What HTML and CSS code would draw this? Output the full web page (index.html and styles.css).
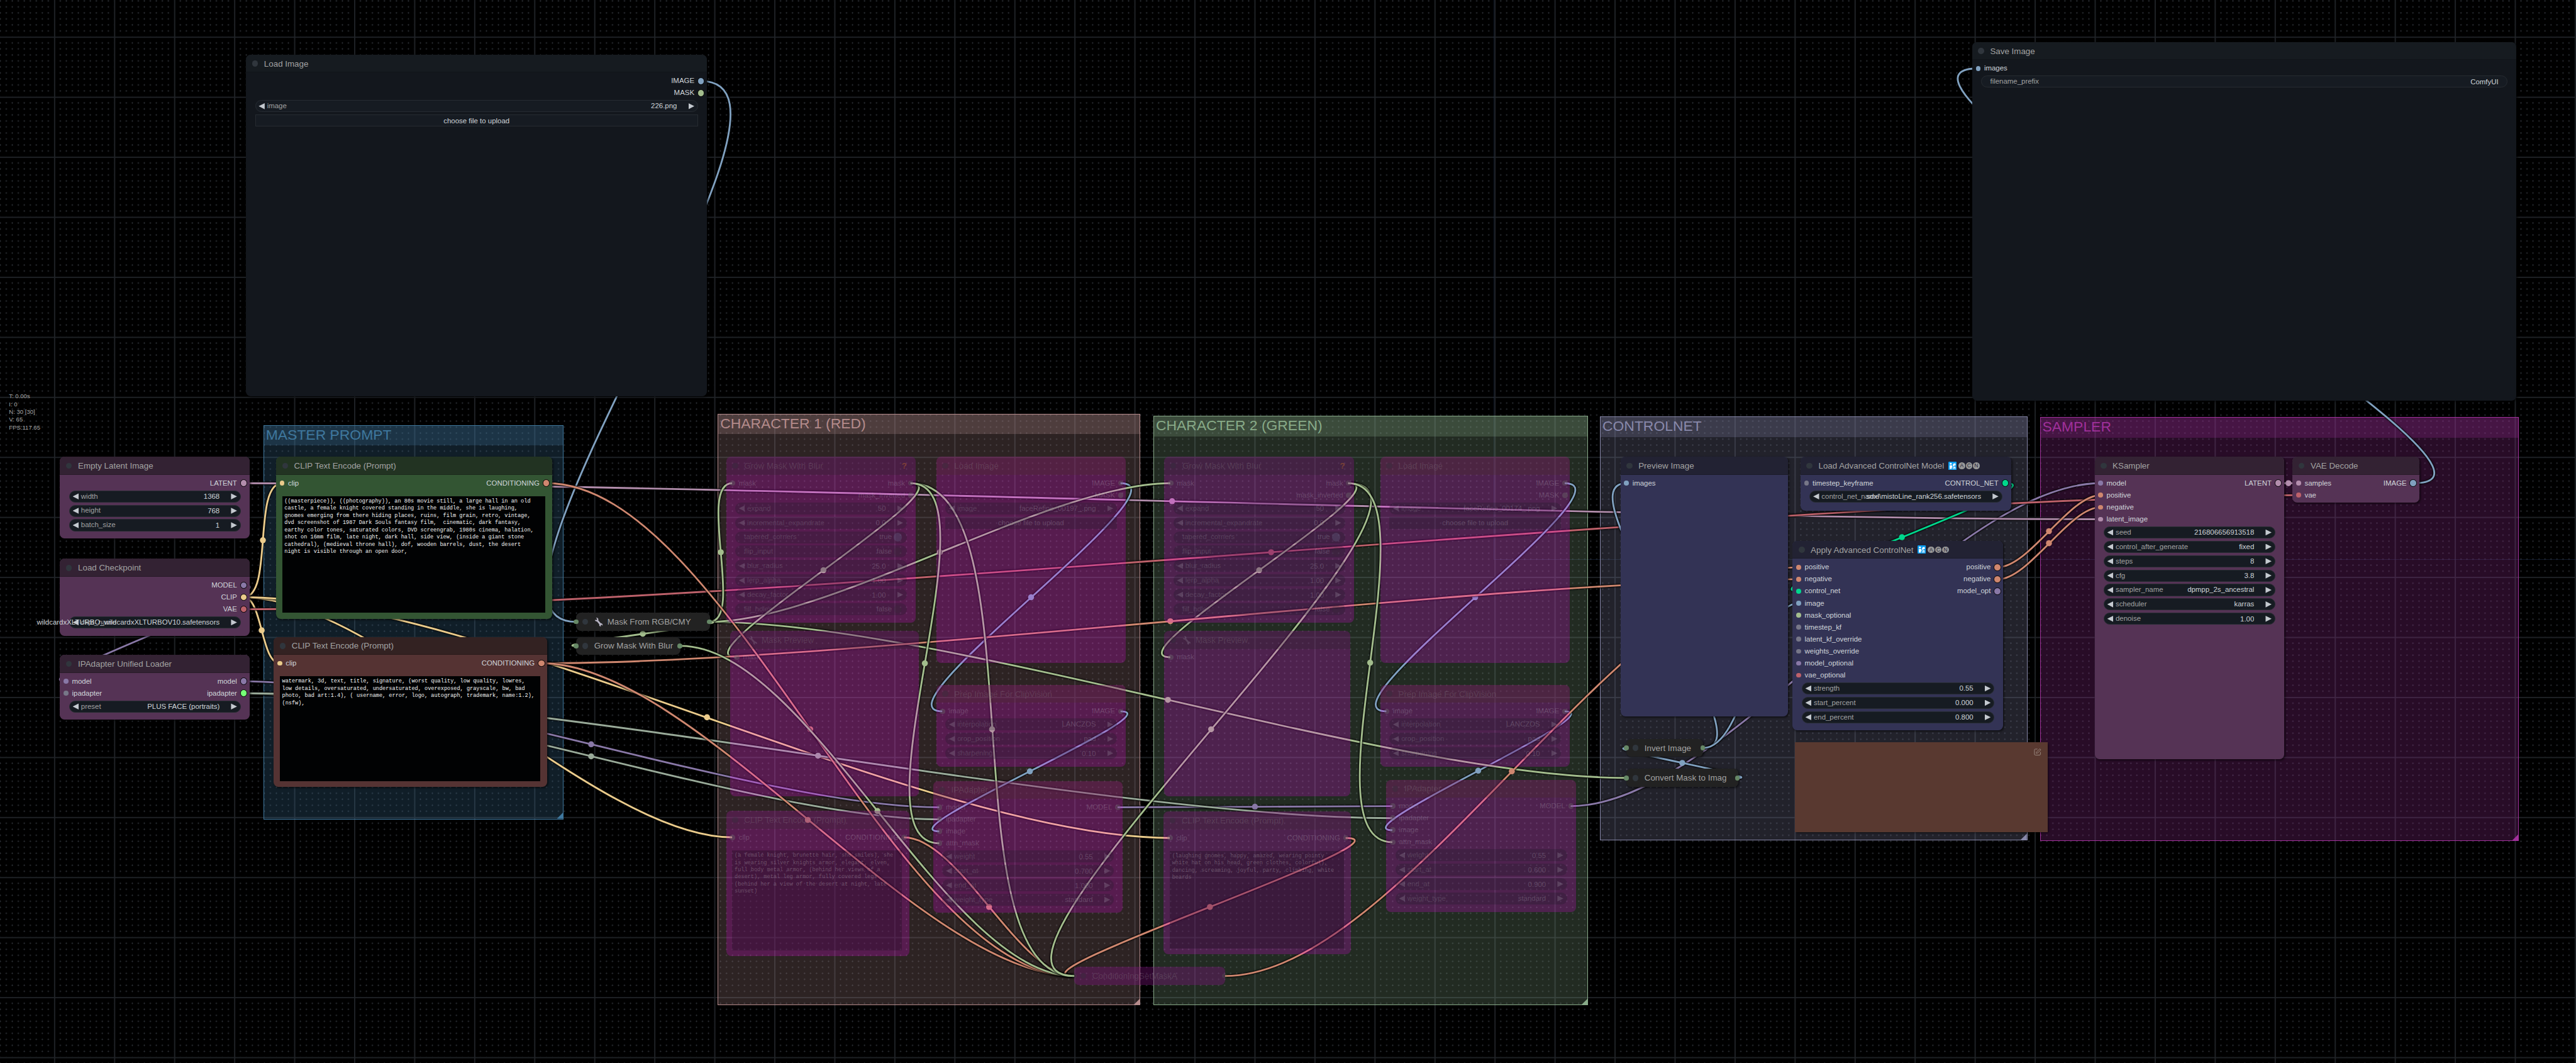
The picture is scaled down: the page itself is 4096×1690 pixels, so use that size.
FILE: index.html
```html
<!DOCTYPE html>
<html lang="en">
<head>
<meta charset="utf-8">
<title>ComfyUI</title>
<link rel="stylesheet" href="styles.css">
</head>
<body>
<main class="canvas">

<svg class="grid" aria-hidden="true">
  <defs>
    <pattern id="dots" x="0" y="1" width="10" height="10" patternUnits="userSpaceOnUse">
      <rect class="dot" x="0" y="0" width="2" height="1"/><rect class="dot" x="9" y="0" width="1" height="1"/>
      <rect class="dot" x="0" y="1" width="1" height="1"/><rect class="dot" x="0" y="9" width="1" height="1"/>
    </pattern>
    <pattern id="lines" x="90" y="61" width="100" height="100" patternUnits="userSpaceOnUse">
      <rect class="clear" width="100" height="4" y="-1"/><rect class="clear" y="99" width="100" height="1"/>
      <rect class="clear" width="4" height="100" x="-1"/><rect class="clear" x="99" width="1" height="100"/>
      <rect width="100" height="2"/><rect width="2" height="100"/>
    </pattern>
    <symbol id="wrench" viewBox="0 0 16 16"><path d="M1 4.2 3.4 5l1.4-1L4.600 2.200 3 .8C5 .2 7 1.400 7.200 3.400c.1.700 0 1.200-.2 1.800l4.400 5.200c.7-.1 1.600 0 2.400.7 1 .8 1.300 2.200.8 3.700l-1.500-1.500-1.500.4-.4 1.400 1 .8c-1.600.4-3-.3-3.400-1.700-.2-.7-.1-1.300.1-1.900L4.600 7.200C3 7.500 1 6.300 1 4.200z"/></symbol>
    <symbol id="passport" viewBox="0 0 14 14"><rect width="14" height="14" rx="1.500" fill="#0a9df0"/><circle cx="4" cy="3.400" r="1.600"/><path d="M2.200 6h3.800l1 3.600H5.600V12H2.200z"/><path d="M7.600 4.600 9 3h3v3.400h-1.600L9.200 7.600H7.600zM8 9l2-.8 2 .8v1.200H8zM7.200 11h5v1h-5z"/></symbol>
    <symbol id="edit" viewBox="0 0 14 14"><path d="M7 2H3.500Q2 2 2 3.500v7Q2 12 3.500 12h7q1.500 0 1.500-1.500V7M5 9l.5-2.200L11 1.500l1.700 1.700L7.200 8.600z"/></symbol>
  </defs>
  <rect width="100%" height="100%" fill="url(#dots)"/>
  <rect width="100%" height="100%" fill="url(#lines)"/>
</svg>
<div class="axis"></div>

<section class="group master"><h2>MASTER PROMPT</h2></section>
<section class="group red"><h2>CHARACTER 1 (RED)</h2></section>
<section class="group green"><h2>CHARACTER 2 (GREEN)</h2></section>
<section class="group control"><h2>CONTROLNET</h2></section>
<section class="group sampler"><h2>SAMPLER</h2></section>

<svg class="links" aria-hidden="true">
  <g class="clip">
    <path d="M406 995C456 995 420 805 470 805"/><circle cx="438" cy="900" r="5"/>
    <path d="M406 995C437 995 435 1105 466 1105"/><circle cx="436" cy="1050" r="5"/>
    <path d="M406 995C633 995 993 1395 1220 1395"/>
    <path d="M406 995C805 995 1550 1396 1949 1396"/><circle cx="1178" cy="1195" r="5"/>
  </g>
  <g class="model">
    <path d="M406 975C490 975 26 1135 110 1135"/>
    <path d="M406 1135C700 1135 1271 1345 1565 1345"/><circle cx="985" cy="1240" r="5"/>
    <path d="M1862 1345C1977 1345 2205 1343 2320 1343"/><circle cx="2091" cy="1344" r="5"/>
    <path d="M2617 1343C2875 1343 3242 805 3500 805"/>
  </g>
  <g class="ip">
    <path d="M406 1155C700 1155 1271 1365 1565 1365"/><circle cx="985" cy="1260" r="5"/>
    <path d="M406 1155C887 1155 1839 1363 2320 1363"/><circle cx="1363" cy="1259" r="5"/>
  </g>
  <g class="latent">
    <path d="M406 805C1180 805 2726 865 3500 865"/><circle cx="1953" cy="835" r="5"/>
    <path d="M3797 805H3830"/><circle cx="3813" cy="805" r="5"/>
  </g>
  <g class="vae"><path d="M406 1015C1263 1015 2973 825 3830 825"/><circle cx="2118" cy="920" r="5"/></g>
  <g class="image">
    <path d="M1168 135C1399 135 729 1036 960 1036"/>
    <path d="M1867 805C1988 805 1449 1185 1570 1185"/><circle cx="1718" cy="995" r="5"/>
    <path d="M1867 1185C1958 1185 1474 1385 1565 1385"/><circle cx="1716" cy="1285" r="5"/>
    <path d="M2607 805C2728 805 2189 1185 2310 1185"/><circle cx="2458" cy="995" r="5"/>
    <path d="M2607 1185C2694 1185 2233 1383 2320 1383"/><circle cx="2463" cy="1284" r="5"/>
    <path d="M2896 1296C2944 1296 2662 1246 2710 1246"/><circle cx="2803" cy="1271" r="5"/>
    <path d="M2838 1246C2953 1246 2595 805 2710 805"/>
    <path d="M2838 1246C2910 1246 2925 1005 2997 1005"/>
    <path d="M4022 805C4273 805 3045 114 3296 114"/>
  </g>
  <g class="mask">
    <path d="M1182 1036C1569 1036 2323 1296 2710 1296"/><circle cx="1946" cy="1166" r="5"/>
    <path d="M1182 1036C1382 1036 1750 805 1950 805"/><circle cx="1566" cy="920" r="5"/>
    <path d="M1182 1036C1241 1036 1161 805 1220 805"/><circle cx="1201" cy="920" r="5"/>
    <path d="M1182 1036C1238 1036 904 1076 960 1076"/><circle cx="1071" cy="1056" r="5"/>
    <path d="M1517 805C1620 805 1124 1095 1227 1095"/><circle cx="1372" cy="950" r="5"/>
    <path d="M2246 805C2350 805 1846 1095 1950 1095"/><circle cx="2098" cy="950" r="5"/>
  </g>
  <g class="cond">
    <path d="M903 1105C1428 1105 2472 965 2997 965"/><circle cx="1950" cy="1035" r="5"/>
    <path d="M903 1105C1160 1105 1533 1626 1790 1626"/><circle cx="1346" cy="1366" r="5"/>
    <path d="M911 805C1212 805 1489 1626 1790 1626"/><circle cx="1350" cy="1215" r="5"/>
    <path d="M1506 1395C1598 1395 1698 1626 1790 1626"/><circle cx="1648" cy="1511" r="5"/>
    <path d="M2242 1396C2369 1396 1663 1626 1790 1626"/><circle cx="2016" cy="1511" r="5"/>
    <path d="M2041 1626C2334 1626 2704 945 2997 945"/><circle cx="2519" cy="1285" r="5"/>
    <path d="M3329 945C3381 945 3448 825 3500 825"/><circle cx="3414" cy="885" r="5"/>
    <path d="M3329 965C3381 965 3448 845 3500 845"/><circle cx="3414" cy="905" r="5"/>
  </g>
  <g class="mask">
    <path d="M1134 1076C1348 1076 1576 1626 1790 1626"/><circle cx="1462" cy="1351" r="5"/>
    <path d="M1517 805C1733 805 1574 1626 1790 1626"/><circle cx="1653" cy="1215" r="5"/>
    <path d="M1517 805C1667 805 1415 1405 1565 1405"/><circle cx="1541" cy="1105" r="5"/>
    <path d="M2246 805C2481 805 1555 1626 1790 1626"/><circle cx="2018" cy="1215" r="5"/>
    <path d="M2246 805C2397 805 2169 1403 2320 1403"/><circle cx="2283" cy="1104" r="5"/>
  </g>
  <g class="cnet"><path d="M3342 805C3439 805 2900 985 2997 985"/><circle cx="3169" cy="895" r="5"/></g>
</svg>

<article class="node base load-image">
  <h3>Load Image</h3>
  <div class="slots"><ul></ul><ul class="out"><li class="image">IMAGE</li><li class="mask">MASK</li></ul></div>
  <div class="widget"><button class="prev" aria-label="Previous image"></button><label><span>image</span><select><option>226.png</option></select></label><button class="next" aria-label="Next image"></button></div>
  <button class="upload">choose file to upload</button>
</article>

<article class="node base save-image">
  <h3>Save Image</h3>
  <div class="slots"><ul><li class="image">images</li></ul></div>
  <div class="widget text"><label><span>filename_prefix</span><input value="ComfyUI"></label></div>
</article>

<article class="node purple empty-latent">
  <h3>Empty Latent Image</h3>
  <div class="slots"><ul></ul><ul class="out"><li class="latent">LATENT</li></ul></div>
  <div class="widget"><button class="prev" aria-label="Decrease"></button><label><span>width</span><input value="1368"></label><button class="next" aria-label="Increase"></button></div>
  <div class="widget"><button class="prev" aria-label="Decrease"></button><label><span>height</span><input value="768"></label><button class="next" aria-label="Increase"></button></div>
  <div class="widget"><button class="prev" aria-label="Decrease"></button><label><span>batch_size</span><input value="1"></label><button class="next" aria-label="Increase"></button></div>
</article>

<article class="node purple checkpoint">
  <h3>Load Checkpoint</h3>
  <div class="slots"><ul></ul><ul class="out"><li class="model">MODEL</li><li class="clip">CLIP</li><li class="vae">VAE</li></ul></div>
  <div class="widget"><button class="prev" aria-label="Previous"></button><label><span>ckpt_name</span><select><option>wildcardxXLTURBO_wildcardxXLTURBOV10.safetensors</option></select></label><button class="next" aria-label="Next"></button></div>
</article>

<article class="node purple unified">
  <h3>IPAdapter Unified Loader</h3>
  <div class="slots"><ul><li class="model">model</li><li class="none">ipadapter</li></ul><ul class="out"><li class="model">model</li><li class="lime">ipadapter</li></ul></div>
  <div class="widget"><button class="prev" aria-label="Previous"></button><label><span>preset</span><select><option>PLUS FACE (portraits)</option></select></label><button class="next" aria-label="Next"></button></div>
</article>

<article class="node moss clip-positive">
  <h3>CLIP Text Encode (Prompt)</h3>
  <div class="slots"><ul><li class="clip">clip</li></ul><ul class="out"><li class="cond">CONDITIONING</li></ul></div>
  <textarea aria-label="Positive prompt">((masterpiece)), ((photography)), an 80s movie still, a large hall in an old
castle, a female knight covered standing in the middle, she is laughing,
gnomes emerging from there hiding places, ruins, film grain, retro, vintage,
dvd screenshot of 1987 Dark Souls fantasy film,  cinematic, dark fantasy,
earthy color tones, saturated colors, DVD screengrab, 1980s cinema, halation,
shot on 16mm film, late night, dark hall, side view, (inside a giant stone
cathedral), (medieval throne hall), dof, wooden barrels, dust, the desert
night is visible through an open door,</textarea>
</article>

<article class="node rust clip-negative">
  <h3>CLIP Text Encode (Prompt)</h3>
  <div class="slots"><ul><li class="clip">clip</li></ul><ul class="out"><li class="cond">CONDITIONING</li></ul></div>
  <textarea aria-label="Negative prompt">watermark, 3d, text, title, signature, (worst quality, low quality, lowres,
low details, oversaturated, undersaturated, overexposed, grayscale, bw, bad
photo, bad art:1.4), ( username, error, logo, autograph, trademark, name:1.2),
(nsfw),</textarea>
</article>

<article class="node collapsed mask-rgb"><h3><svg class="tool" aria-hidden="true"><use href="#wrench"/></svg>Mask From RGB/CMY</h3></article>
<article class="node collapsed grow-blur"><h3>Grow Mask With Blur</h3></article>

<article class="node muted grow-1">
  <h3>Grow Mask With Blur<button class="help">?</button></h3>
  <div class="slots"><ul><li>mask</li></ul><ul class="out"><li>mask</li><li>mask_inverted</li></ul></div>
  <div class="widget"><button class="prev" aria-label="Decrease"></button><label><span>expand</span><input value="50"></label><button class="next" aria-label="Increase"></button></div>
  <div class="widget"><button class="prev" aria-label="Decrease"></button><label><span>incremental_expandrate</span><input value="0.0"></label><button class="next" aria-label="Increase"></button></div>
  <label class="widget toggle"><span>tapered_corners</span><span>true</span><input type="checkbox" checked></label>
  <label class="widget toggle"><span>flip_input</span><span>false</span><input type="checkbox"></label>
  <div class="widget"><button class="prev" aria-label="Decrease"></button><label><span>blur_radius</span><input value="25.0"></label><button class="next" aria-label="Increase"></button></div>
  <div class="widget"><button class="prev" aria-label="Decrease"></button><label><span>lerp_alpha</span><input value="1.00"></label><button class="next" aria-label="Increase"></button></div>
  <div class="widget"><button class="prev" aria-label="Decrease"></button><label><span>decay_factor</span><input value="1.00"></label><button class="next" aria-label="Increase"></button></div>
  <label class="widget toggle"><span>fill_holes</span><span>false</span><input type="checkbox"></label>
</article>

<article class="node muted brown face-1">
  <h3>Load Image</h3>
  <div class="slots"><ul></ul><ul class="out"><li class="image">IMAGE</li><li>MASK</li></ul></div>
  <div class="widget"><button class="prev" aria-label="Previous image"></button><label><span>image</span><select><option>faceRefine_00197_.png</option></select></label><button class="next" aria-label="Next image"></button></div>
  <button class="upload">choose file to upload</button>
</article>

<article class="node muted preview-1">
  <h3><svg class="tool" aria-hidden="true"><use href="#wrench"/></svg>Mask Preview</h3>
  <div class="slots"><ul><li>mask</li></ul></div>
</article>

<article class="node muted brown prep-1">
  <h3>Prep Image For ClipVision</h3>
  <div class="slots"><ul><li class="image">image</li></ul><ul class="out"><li class="image">IMAGE</li></ul></div>
  <div class="widget"><button class="prev" aria-label="Previous"></button><label><span>interpolation</span><select><option>LANCZOS</option></select></label><button class="next" aria-label="Next"></button></div>
  <div class="widget"><button class="prev" aria-label="Previous"></button><label><span>crop_position</span><select><option>pad</option></select></label><button class="next" aria-label="Next"></button></div>
  <div class="widget"><button class="prev" aria-label="Decrease"></button><label><span>sharpening</span><input value="0.10"></label><button class="next" aria-label="Increase"></button></div>
</article>

<article class="node muted brown adapter-1">
  <h3>IPAdapter</h3>
  <div class="slots"><ul><li class="model">model</li><li>ipadapter</li><li class="image">image</li><li>attn_mask</li></ul><ul class="out"><li class="model">MODEL</li></ul></div>
  <div class="widget"><button class="prev" aria-label="Decrease"></button><label><span>weight</span><input value="0.55"></label><button class="next" aria-label="Increase"></button></div>
  <div class="widget"><button class="prev" aria-label="Decrease"></button><label><span>start_at</span><input value="0.700"></label><button class="next" aria-label="Increase"></button></div>
  <div class="widget"><button class="prev" aria-label="Decrease"></button><label><span>end_at</span><input value="1.000"></label><button class="next" aria-label="Increase"></button></div>
  <div class="widget"><button class="prev" aria-label="Previous"></button><label><span>weight_type</span><select><option>standard</option></select></label><button class="next" aria-label="Next"></button></div>
</article>

<article class="node muted olive clip-1">
  <h3>CLIP Text Encode (Prompt)</h3>
  <div class="slots"><ul><li>clip</li></ul><ul class="out"><li>CONDITIONING</li></ul></div>
  <textarea aria-label="Character 1 prompt">(a female knight, brunette hair, she smiles), she
is wearing silver knights armor, elegant, elven,
full body metal armor, (behind her views of a
desert), metal leg armor, fully covered legs
(behind her a view of the desert at night, late
sunset)</textarea>
</article>

<article class="node muted grow-2">
  <h3>Grow Mask With Blur<button class="help">?</button></h3>
  <div class="slots"><ul><li>mask</li></ul><ul class="out"><li>mask</li><li>mask_inverted</li></ul></div>
  <div class="widget"><button class="prev" aria-label="Decrease"></button><label><span>expand</span><input value="50"></label><button class="next" aria-label="Increase"></button></div>
  <div class="widget"><button class="prev" aria-label="Decrease"></button><label><span>incremental_expandrate</span><input value="0.0"></label><button class="next" aria-label="Increase"></button></div>
  <label class="widget toggle"><span>tapered_corners</span><span>true</span><input type="checkbox" checked></label>
  <label class="widget toggle"><span>flip_input</span><span>false</span><input type="checkbox"></label>
  <div class="widget"><button class="prev" aria-label="Decrease"></button><label><span>blur_radius</span><input value="25.0"></label><button class="next" aria-label="Increase"></button></div>
  <div class="widget"><button class="prev" aria-label="Decrease"></button><label><span>lerp_alpha</span><input value="1.00"></label><button class="next" aria-label="Increase"></button></div>
  <div class="widget"><button class="prev" aria-label="Decrease"></button><label><span>decay_factor</span><input value="1.00"></label><button class="next" aria-label="Increase"></button></div>
  <label class="widget toggle"><span>fill_holes</span><span>false</span><input type="checkbox"></label>
</article>

<article class="node muted brown face-2">
  <h3>Load Image</h3>
  <div class="slots"><ul></ul><ul class="out"><li class="image">IMAGE</li><li>MASK</li></ul></div>
  <div class="widget"><button class="prev" aria-label="Previous image"></button><label><span>image</span><select><option>faceRefine_00174_.png</option></select></label><button class="next" aria-label="Next image"></button></div>
  <button class="upload">choose file to upload</button>
</article>

<article class="node muted preview-2">
  <h3><svg class="tool" aria-hidden="true"><use href="#wrench"/></svg>Mask Preview</h3>
  <div class="slots"><ul><li>mask</li></ul></div>
</article>

<article class="node muted brown prep-2">
  <h3>Prep Image For ClipVision</h3>
  <div class="slots"><ul><li class="image">image</li></ul><ul class="out"><li class="image">IMAGE</li></ul></div>
  <div class="widget"><button class="prev" aria-label="Previous"></button><label><span>interpolation</span><select><option>LANCZOS</option></select></label><button class="next" aria-label="Next"></button></div>
  <div class="widget"><button class="prev" aria-label="Previous"></button><label><span>crop_position</span><select><option>pad</option></select></label><button class="next" aria-label="Next"></button></div>
  <div class="widget"><button class="prev" aria-label="Decrease"></button><label><span>sharpening</span><input value="0.10"></label><button class="next" aria-label="Increase"></button></div>
</article>

<article class="node muted brown adapter-2">
  <h3>IPAdapter</h3>
  <div class="slots"><ul><li class="model">model</li><li>ipadapter</li><li class="image">image</li><li>attn_mask</li></ul><ul class="out"><li class="model">MODEL</li></ul></div>
  <div class="widget"><button class="prev" aria-label="Decrease"></button><label><span>weight</span><input value="0.55"></label><button class="next" aria-label="Increase"></button></div>
  <div class="widget"><button class="prev" aria-label="Decrease"></button><label><span>start_at</span><input value="0.600"></label><button class="next" aria-label="Increase"></button></div>
  <div class="widget"><button class="prev" aria-label="Decrease"></button><label><span>end_at</span><input value="0.900"></label><button class="next" aria-label="Increase"></button></div>
  <div class="widget"><button class="prev" aria-label="Previous"></button><label><span>weight_type</span><select><option>standard</option></select></label><button class="next" aria-label="Next"></button></div>
</article>

<article class="node muted olive clip-2">
  <h3>CLIP Text Encode (Prompt)</h3>
  <div class="slots"><ul><li>clip</li></ul><ul class="out"><li>CONDITIONING</li></ul></div>
  <textarea aria-label="Character 2 prompt">(laughing gnomes, happy, amazed, wearing pointy
white hat on his head, green clothes, colorful),
dancing, screaming, joyful, party, climbing, white
beards</textarea>
</article>

<article class="node muted collapsed set-mask"><h3>ConditioningSetMaskA</h3></article>

<article class="node indigo preview-image">
  <h3>Preview Image</h3>
  <div class="slots"><ul><li class="image">images</li></ul></div>
</article>

<article class="node indigo load-control">
  <h3>Load Advanced ControlNet Model<span class="acn"><svg aria-hidden="true"><use href="#passport"/></svg><b>A</b><b>C</b><b>N</b></span></h3>
  <div class="slots"><ul><li class="none">timestep_keyframe</li></ul><ul class="out"><li class="cnet">CONTROL_NET</li></ul></div>
  <div class="widget"><button class="prev" aria-label="Previous"></button><label><span>control_net_name</span><select><option>sdxl\mistoLine_rank256.safetensors</option></select></label><button class="next" aria-label="Next"></button></div>
</article>

<article class="node indigo apply-control">
  <h3>Apply Advanced ControlNet<span class="acn"><svg aria-hidden="true"><use href="#passport"/></svg><b>A</b><b>C</b><b>N</b></span></h3>
  <div class="slots">
    <ul><li class="cond">positive</li><li class="cond">negative</li><li class="cnet">control_net</li><li class="image">image</li><li class="mask">mask_optional</li><li class="none">timestep_kf</li><li class="none">latent_kf_override</li><li class="none">weights_override</li><li class="model">model_optional</li><li class="vae">vae_optional</li></ul>
    <ul class="out"><li class="cond">positive</li><li class="cond">negative</li><li class="model">model_opt</li></ul>
  </div>
  <div class="widget"><button class="prev" aria-label="Decrease"></button><label><span>strength</span><input value="0.55"></label><button class="next" aria-label="Increase"></button></div>
  <div class="widget"><button class="prev" aria-label="Decrease"></button><label><span>start_percent</span><input value="0.000"></label><button class="next" aria-label="Increase"></button></div>
  <div class="widget"><button class="prev" aria-label="Decrease"></button><label><span>end_percent</span><input value="0.800"></label><button class="next" aria-label="Increase"></button></div>
</article>

<article class="node collapsed invert"><h3>Invert Image</h3></article>
<article class="node collapsed convert"><h3>Convert Mask to Imag</h3></article>

<article class="note"><button aria-label="Edit note"><svg aria-hidden="true"><use href="#edit"/></svg></button></article>

<article class="node purple ksampler">
  <h3>KSampler</h3>
  <div class="slots"><ul><li class="model">model</li><li class="cond">positive</li><li class="cond">negative</li><li class="latent">latent_image</li></ul><ul class="out"><li class="latent">LATENT</li></ul></div>
  <div class="widget"><button class="prev" aria-label="Decrease"></button><label><span>seed</span><input value="216806656913518"></label><button class="next" aria-label="Increase"></button></div>
  <div class="widget"><button class="prev" aria-label="Previous"></button><label><span>control_after_generate</span><select><option>fixed</option></select></label><button class="next" aria-label="Next"></button></div>
  <div class="widget"><button class="prev" aria-label="Decrease"></button><label><span>steps</span><input value="8"></label><button class="next" aria-label="Increase"></button></div>
  <div class="widget"><button class="prev" aria-label="Decrease"></button><label><span>cfg</span><input value="3.8"></label><button class="next" aria-label="Increase"></button></div>
  <div class="widget"><button class="prev" aria-label="Previous"></button><label><span>sampler_name</span><select><option>dpmpp_2s_ancestral</option></select></label><button class="next" aria-label="Next"></button></div>
  <div class="widget"><button class="prev" aria-label="Previous"></button><label><span>scheduler</span><select><option>karras</option></select></label><button class="next" aria-label="Next"></button></div>
  <div class="widget"><button class="prev" aria-label="Decrease"></button><label><span>denoise</span><input value="1.00"></label><button class="next" aria-label="Increase"></button></div>
</article>

<article class="node purple vae-decode">
  <h3>VAE Decode</h3>
  <div class="slots"><ul><li class="latent">samples</li><li class="vae">vae</li></ul><ul class="out"><li class="image">IMAGE</li></ul></div>
</article>

<aside class="stats"><p>T: 0.00s</p><p>I: 0</p><p>N: 30 [30]</p><p>V: 65</p><p>FPS:117.65</p></aside>
</main>
</body>
</html>
```

FILE: styles.css
```css
* { box-sizing: border-box; margin: 0; padding: 0; }

body {
  display: flex;
  min-height: 100vh;
  background: #000;
  font-family: "Liberation Sans", Arial, sans-serif;
}

/* Graph space: 1px is one graph unit, zoom is the view scale. */
.canvas {
  position: relative;
  flex: 1;
  zoom: 0.9543;
  overflow: hidden;
  font-size: 12px;
  color: #d0d5da;
}

.grid, .links { position: absolute; inset: 0; width: 100%; height: 100%; }
.grid pattern rect { fill: #1f2226; }
.grid pattern rect.dot { fill: #26292e; }
.grid pattern rect.clear { fill: #000; }
.axis {
  position: absolute;
  left: 2489px; top: 0; right: 0; height: 933px;
  border: solid #223355;
  border-width: 0 0 2px 2px;
  opacity: 0.45;
}

/* Groups */
.group { position: absolute; border: 1px solid var(--c); color: var(--c); }
.group::before { content: ""; position: absolute; inset: 0; background: var(--c); opacity: 0.25; }
.group::after {
  content: ""; position: absolute; right: 0; bottom: 0; width: 10px; height: 10px;
  background: var(--c); clip-path: polygon(100% 0, 100% 100%, 0 100%);
}
.group h2 {
  position: relative;
  height: 33px;
  padding-left: 3px;
  font-size: 24px;
  font-weight: 400;
  line-height: 31px;
}
.group h2::before { content: ""; position: absolute; inset: 0; background: var(--c); opacity: 0.25; }
.master { --c: #3f789e; left: 439px; top: 708px; width: 500px; height: 657px; }
.red { --c: #b58b8b; left: 1196px; top: 689px; width: 704px; height: 986px; }
.green { --c: #88aa88; left: 1922px; top: 693px; width: 724px; height: 982px; }
.control { --c: #8888aa; left: 2666px; top: 694px; width: 712px; height: 706px; }
.sampler { --c: #a1309b; left: 3399px; top: 695px; width: 798px; height: 706px; }

/* Slot and link types */
.clip { --t: #eacb8b; }
.cond { --t: #cf876f; }
.cnet { --t: #00d78d; }
.image { --t: #80a1c0; }
.latent { --t: #b38ead; }
.mask { --t: #a3bd8d; }
.model { --t: #8978a7; }
.vae { --t: #bd616a; }
.ip { --t: #99aa99; }
.lime { --t: #77ff77; }
.none { --t: #777788; }

.links path { fill: none; stroke: var(--t); stroke-width: 3; filter: drop-shadow(0 0 1px #000) drop-shadow(0 0 1px #000); }
.links circle { fill: var(--t); }

/* Nodes */
.node {
  position: absolute;
  display: flex;
  flex-direction: column;
  border-radius: 8px;
  background: var(--bg);
  box-shadow: 2px 2px 3px rgba(0, 0, 0, 0.5);
}
.base { --bg: #13171d; --head: #161b20; }
.purple { --bg: #553355; --head: #332233; }
.moss { --bg: #335533; --head: #223322; }
.rust { --bg: #553333; --head: #332222; }
.indigo { --bg: #333355; --head: #222233; }

.node h3 {
  display: flex;
  align-items: center;
  flex: none;
  height: 30px;
  padding: 0 15px 0 10px;
  border-radius: 8px 8px 0 0;
  background: var(--head);
  box-shadow: inset 0 -1px rgba(0, 0, 0, 0.2);
  font-size: 14px;
  font-weight: 400;
  color: #a2a2a2;
  white-space: nowrap;
}
.node h3::before {
  content: "";
  flex: none;
  width: 10px;
  height: 10px;
  margin-right: 10px;
  border-radius: 50%;
  background: #30363d;
}
.tool { width: 15px; height: 16px; margin-right: 7px; fill: #b8b4c4; }
.acn { display: flex; align-items: center; gap: 1px; margin-left: 7px; }
.acn svg { width: 14px; height: 14px; margin-right: 2px; fill: #fff; }
.acn b {
  width: 11px; height: 11px; border-radius: 50%; background: #999;
  font-size: 9px; line-height: 11px; font-weight: 400; text-align: center; color: #222233;
}

.slots { display: flex; justify-content: space-between; padding: 4px 4px 2px 6px; }
.slots ul { list-style: none; }
.slots li { display: flex; align-items: center; gap: 6px; height: 20px; line-height: 22px; }
.slots li::before { content: ""; width: 8px; height: 8px; border-radius: 50%; background: var(--t); }
.slots .out li { flex-direction: row-reverse; gap: 5px; }
.slots .out li::before { width: 10px; height: 10px; border: 1px solid #000; }

button, input, select, textarea { border: 0; outline: 0; background: none; font: inherit; color: inherit; }

.widget {
  display: flex;
  align-items: center;
  height: 20px;
  margin: 0 15px 4px;
  border: 1px solid #262b31;
  border-radius: 10px;
  background: #161b22;
}
.widget button { flex: none; width: 10px; height: 10px; background: #c4c9cf; }
.widget .prev { margin: 0 4px 0 5px; clip-path: polygon(100% 0, 100% 100%, 0 50%); }
.widget .next { margin: 0 5px 0 19px; clip-path: polygon(0 0, 100% 50%, 0 100%); }

/* The name and the value share one cell, so a long value runs out over the name. */
.widget > label { display: grid; grid-template-columns: minmax(0, 1fr); flex: 1; min-width: 0; line-height: 18px; }
.widget > label > * { grid-area: 1 / 1; }
.widget label span { color: #a2a2a2; }
.widget input { width: 100%; height: 18px; text-align: right; }
.widget select { justify-self: end; width: max-content; height: 18px; appearance: none; text-align-last: right; }
.widget.text { padding: 0 14px; }
.toggle { padding: 0 7px 0 14px; line-height: 18px; }
.toggle span:first-child { flex: 1; }
.toggle input { width: 14px; height: 14px; margin-left: 3px; border-radius: 50%; appearance: none; background: #333; }
.toggle input:checked { background: #8899aa; }

.upload { height: 20px; margin: 0 15px; border: 1px solid #262b31; background: #161b22; }

.node textarea {
  flex: 1;
  margin: 10px 12px 10px 10px;
  padding: 3px 4px;
  background: #010203;
  color: #f4f4f4;
  font-family: "Liberation Mono", monospace;
  font-size: 9px;
  line-height: 12px;
  white-space: pre;
  overflow: hidden;
  resize: none;
}

.muted { --bg: rgba(255, 0, 255, 0.2); --head: rgba(34, 34, 34, 0.25); box-shadow: none; color: rgba(200, 200, 210, 0.25); }
.muted.brown { --head: rgba(70, 46, 30, 0.25); }
.muted.olive { --head: rgba(56, 40, 48, 0.25); }
.muted h3 { color: rgba(153, 153, 153, 0.24); box-shadow: none; }
.muted h3::before { background: rgba(48, 54, 61, 0.3); }
.muted .slots li::before, .muted .slots .out li::before { background: rgba(110, 110, 110, 0.4); border: 0; width: 9px; height: 9px; }
.muted .widget, .muted .upload { border-color: transparent; background: rgba(22, 27, 34, 0.25); background-clip: border-box; }
.muted .widget button { background: rgba(200, 200, 210, 0.2); }
.muted .widget label span, .muted .toggle span:first-child { color: rgba(165, 165, 170, 0.25); }
.muted .toggle input { background: rgba(51, 51, 51, 0.2); }
.muted .toggle input:checked { background: rgba(120, 135, 170, 0.22); }
.muted .tool { fill: rgba(180, 180, 190, 0.2); }
.muted textarea { background: rgba(4, 5, 6, 0.25); color: rgba(230, 230, 230, 0.28); }
.help { margin-left: auto; font-size: 14px; font-weight: 700; color: rgba(255, 150, 20, 0.3); }

.collapsed { --head: #222222; height: 30px; }
.collapsed h3 { position: relative; height: 30px; border-radius: 8px; box-shadow: none; }
.collapsed::before, .collapsed::after {
  content: ""; position: absolute; z-index: 1; top: 11px; width: 8px; height: 8px; border-radius: 50%; background: #668866;
}
.collapsed::before { left: -4px; }
.collapsed::after { right: -3px; }
.muted.collapsed { --head: rgba(34, 34, 34, 0.2); }
.muted.collapsed::before, .muted.collapsed::after { background: rgba(102, 136, 102, 0.2); }

/* Places on the canvas, in graph units */
.load-image { left: 410px; top: 91px; width: 768px; height: 569px; }
.save-image { left: 3286px; top: 70px; width: 907px; height: 598px; }
.empty-latent { left: 100px; top: 761px; width: 316px; height: 136px; }
.checkpoint { left: 100px; top: 931px; width: 316px; height: 128px; }
.unified { left: 100px; top: 1091px; width: 316px; height: 108px; }
.clip-positive { left: 460px; top: 761px; width: 460px; height: 270px; }
.clip-negative { left: 456px; top: 1061px; width: 456px; height: 250px; }
.mask-rgb { left: 960px; top: 1021px; width: 223px; }
.grow-blur { left: 960px; top: 1061px; width: 174px; }
.grow-1 { left: 1210px; top: 761px; width: 316px; height: 276px; }
.face-1 { left: 1560px; top: 761px; width: 316px; height: 344px; }
.preview-1 { left: 1217px; top: 1051px; width: 314px; height: 276px; }
.prep-1 { left: 1560px; top: 1141px; width: 316px; height: 136px; }
.adapter-1 { left: 1555px; top: 1301px; width: 316px; height: 220px; }
.clip-1 { left: 1210px; top: 1351px; width: 305px; height: 242px; }
.grow-2 { left: 1940px; top: 761px; width: 316px; height: 276px; }
.face-2 { left: 2300px; top: 761px; width: 316px; height: 344px; }
.preview-2 { left: 1940px; top: 1051px; width: 310px; height: 276px; }
.prep-2 { left: 2300px; top: 1141px; width: 316px; height: 136px; }
.adapter-2 { left: 2310px; top: 1299px; width: 316px; height: 220px; }
.clip-2 { left: 1939px; top: 1352px; width: 312px; height: 238px; }
.set-mask { left: 1790px; top: 1611px; width: 251px; }
.preview-image { left: 2700px; top: 761px; width: 279px; height: 433px; }
.load-control { left: 3000px; top: 761px; width: 351px; height: 90px; }
.apply-control { left: 2987px; top: 901px; width: 351px; height: 316px; }
.invert { left: 2710px; top: 1231px; width: 128px; }
.convert { left: 2710px; top: 1281px; width: 186px; }
.ksampler { left: 3490px; top: 761px; width: 316px; height: 504px; }
.vae-decode { left: 3820px; top: 761px; width: 211px; height: 76px; }

.note {
  position: absolute;
  left: 2991px; top: 1236px; width: 421px; height: 150px;
  display: flex;
  justify-content: flex-end;
  align-items: flex-start;
  padding: 10px 10px;
  background: #593930;
  box-shadow: 2px 2px 3px rgba(0, 0, 0, 0.5);
}
.note svg { display: block; width: 14px; height: 14px; fill: none; stroke: #9a8880; }

.stats { position: absolute; left: 15px; top: 654px; font-size: 10px; line-height: 13px; color: #a8a8a8; }
```
